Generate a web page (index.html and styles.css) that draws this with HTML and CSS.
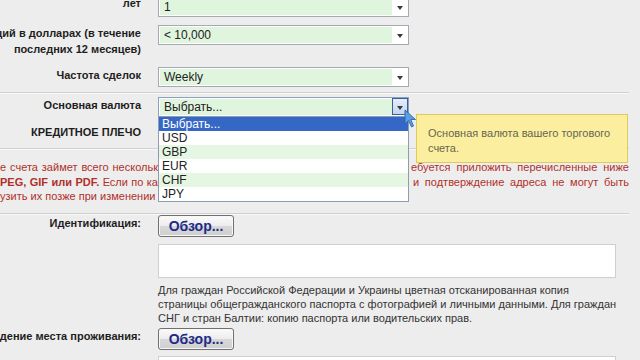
FILE: index.html
```html
<!DOCTYPE html>
<html lang="ru">
<head>
<meta charset="utf-8">
<link rel="stylesheet" href="styles.css">
</head>
<body>
<div class="page">
  <div class="row r1">
    <div class="label"><span>Опыт торговли,</span><span>лет</span></div>
    <div class="field"><div class="select"><span class="val">1</span><span class="btn"><i class="arrow"></i></span></div></div>
  </div>
  <div class="row r2">
    <div class="label"><span>Объем операций в долларах (в течение</span><span>последних 12 месяцев)</span></div>
    <div class="field"><div class="select"><span class="val">&lt; 10,000</span><span class="btn"><i class="arrow"></i></span></div></div>
  </div>
  <div class="row r3">
    <div class="label"><span>Частота сделок</span></div>
    <div class="field"><div class="select"><span class="val">Weekly</span><span class="btn"><i class="arrow"></i></span></div></div>
  </div>
  <div class="sep s1"></div>
  <div class="row r4">
    <div class="label"><span>Основная валюта</span></div>
    <div class="field">
      <div class="select active"><span class="val">Выбрать...</span><span class="btn"><i class="arrow"></i></span></div>
      <ul class="list">
        <li class="sel">Выбрать...</li>
        <li>USD</li>
        <li class="alt">GBP</li>
        <li>EUR</li>
        <li class="alt">CHF</li>
        <li>JPY</li>
      </ul>
      <svg class="cursor" width="13" height="19" viewBox="0 0 13 19"><polygon points="1,1 1,15 4.5,11.5 7.5,18 9.5,17 6.8,10.5 11.5,10.5" fill="#5c9ee2" stroke="#2f63ad" stroke-width="0.9" stroke-linejoin="round"/></svg>
      <div class="tip">Основная валюта вашего торгового счета.</div>
    </div>
  </div>
  <div class="row r5">
    <div class="label"><span>КРЕДИТНОЕ ПЛЕЧО</span></div>
    <div class="field"><div class="select"><span class="val">1:100</span><span class="btn"><i class="arrow"></i></span></div></div>
  </div>
  <div class="sep s2"></div>
  <div class="notice">
    <div class="nl"><span class="left">е счета займет всего нескольк</span><span class="right">ебуется приложить перечисленные ниже</span></div>
    <div class="nl"><span class="left"><b>PEG, GIF или PDF.</b> Если по ка</span><span class="right r2t">и подтверждение адреса не могут быть</span></div>
    <div class="nl"><span class="left last">узить их позже при изменении</span></div>
  </div>
  <div class="sep s3"></div>
  <div class="row r6">
    <div class="label"><span>Идентификация:</span></div>
    <div class="field">
      <button class="browse" type="button">Обзор...</button>
      <div class="filebox"></div>
      <p class="help">Для граждан Российской Федерации и Украины цветная отсканированная копия<br>страницы общегражданского паспорта с фотографией и личными данными. Для граждан<br>СНГ и стран Балтии: копию паспорта или водительских прав.</p>
    </div>
  </div>
  <div class="row r7">
    <div class="label"><span>Подтверждение места проживания:</span></div>
    <div class="field">
      <button class="browse" type="button">Обзор...</button>
      <div class="filebox"></div>
    </div>
  </div>
</div>
</body>
</html>
```
FILE: styles.css
```css
html, body {
  margin: 0;
  padding: 0;
  background: #ededed;
  overflow: hidden;
}
body {
  width: 640px;
  height: 360px;
  font-family: "Liberation Sans", Arial, sans-serif;
  color: #222;
}
.page {
  width: 630px;
  margin-top: -3px;
}
.row {
  display: flex;
  gap: 17px;
}
.label {
  width: 141px;
  flex: none;
  display: flex;
  flex-direction: column;
  align-items: flex-end;
  font-size: 11px;
  font-weight: bold;
  line-height: 16px;
  white-space: nowrap;
  color: #1e1e1e;
}
.field {
  position: relative;
  flex: none;
  width: 458px;
}
.r1 { margin-bottom: 8px; }
.r1 .label { margin-top: -18px; }
.r2 { margin-bottom: 10px; }
.r2 .label { height: 32px; }
.r3 { margin-bottom: 5px; }
.sep {
  border-top: 1px solid #d0d0d0;
  border-bottom: 1px solid #f8f8f8;
  width: 629px;
}
.s1 { margin-bottom: 3px; }
.r4 { margin-bottom: 7px; z-index: 2; position: relative; }
.r5 { margin-bottom: 4px; }
.s2 { margin-bottom: 10px; }

.select {
  display: flex;
  width: 251px;
  height: 20px;
  box-sizing: border-box;
  border: 1px solid #a3aab1;
  background: #fff;
}
.val {
  flex: 1;
  margin: 1px 0 1px 1px;
  padding-left: 4px;
  background: #e0f5de;
  font-size: 12px;
  line-height: 16px;
  color: #222;
}
.btn {
  width: 16px;
  display: flex;
  align-items: center;
  justify-content: center;
  box-sizing: border-box;
}
.arrow {
  width: 0;
  height: 0;
  border-left: 3.5px solid transparent;
  border-right: 3.5px solid transparent;
  border-top: 4px solid #3a3a3a;
  margin-top: 2px;
}
.select.active { border-color: #8aa2c0; }
.select.active .btn {
  border: 1px solid #3d5f93;
  background: linear-gradient(#e4eefb, #c2d6f0);
  margin: 0 0 1px 0;
}
.list {
  position: absolute;
  left: 0;
  top: 19px;
  width: 251px;
  box-sizing: border-box;
  margin: 0;
  padding: 0;
  list-style: none;
  border: 1px solid #8d9cb0;
  background: #fff;
  font-size: 12px;
  z-index: 3;
}
.list li {
  height: 14px;
  line-height: 14px;
  padding-left: 3px;
  color: #222;
}
.list li.alt { background: #e5f7e3; }
.list li.sel { background: #3467c6; color: #fff; }
.cursor {
  position: absolute;
  left: 246px;
  top: 12px;
  z-index: 5;
}
.tip {
  position: absolute;
  left: 258px;
  top: 17px;
  width: 212px;
  height: 49px;
  box-sizing: border-box;
  padding: 11px 10px 0 11px;
  background: #fbef9f;
  border: 1px solid #e2ca59;
  font-size: 11px;
  line-height: 15px;
  color: #676552;
  z-index: 4;
}

.notice {
  width: 629px;
  font-size: 11px;
  line-height: 14.5px;
  color: #b0302a;
  margin-bottom: 9px;
}
.nl {
  display: flex;
  justify-content: space-between;
  white-space: nowrap;
}
.nl .left {
  width: 158px;
  text-align: justify;
  text-align-last: justify;
}
.nl .left.last {
  text-align: left;
  text-align-last: left;
}
.nl .right {
  width: 218px;
  text-align: justify;
  text-align-last: justify;
}
.nl .right.r2t { width: 216px; }
.s3 { margin-bottom: 0; }

.browse {
  display: block;
  width: 76px;
  height: 22px;
  margin: 0;
  padding: 0;
  box-sizing: border-box;
  border: 1px solid #707070;
  border-radius: 3px;
  background: linear-gradient(#fbfbfb 0%, #ececec 50%, #d8d8d8 51%, #cfcfcf 100%);
  font-family: "Liberation Sans", Arial, sans-serif;
  font-size: 14px;
  font-weight: bold;
  color: #1d2b86;
  line-height: 20px;
  box-shadow: inset 0 0 0 1px #f7f7f7;
}
.filebox {
  margin-top: 7px;
  width: 458px;
  height: 34px;
  box-sizing: border-box;
  border: 1px solid #cfcfcf;
  background: #fff;
}
.help {
  margin: 5px 0 3px 0;
  font-size: 11px;
  line-height: 14px;
  color: #333;
  white-space: nowrap;
}
.r7 .filebox { margin-top: 6px; }
```
